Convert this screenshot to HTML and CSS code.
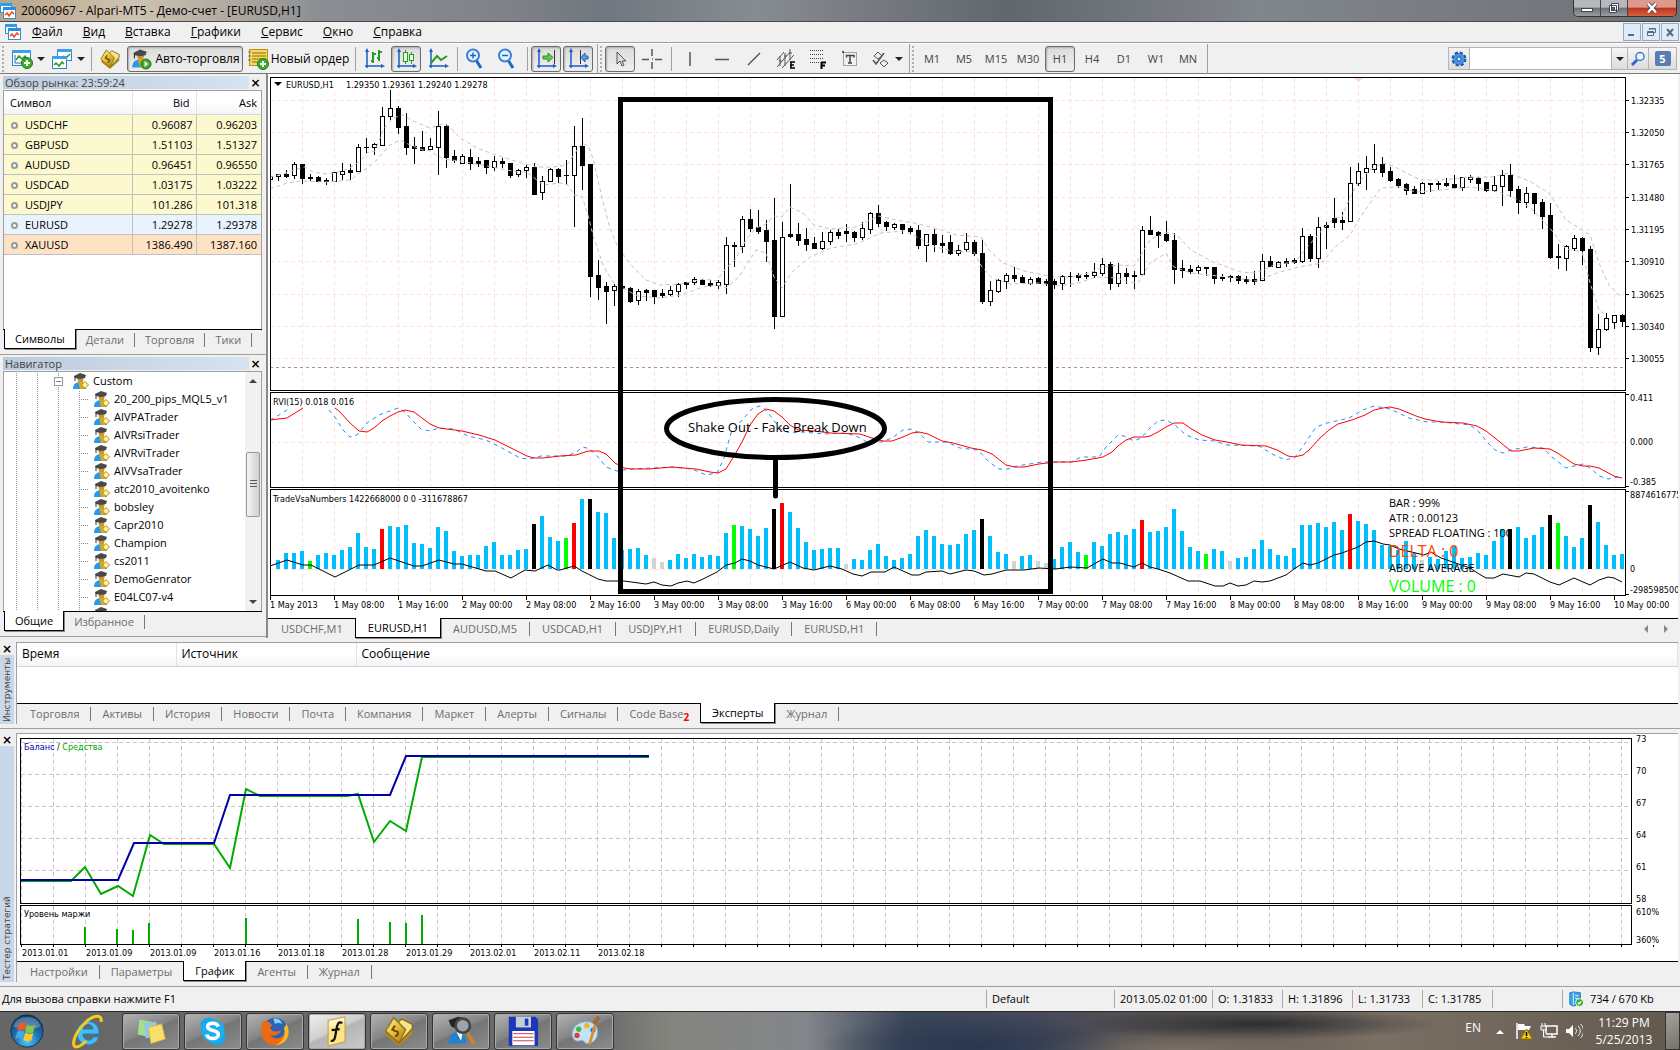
FILE: index.html
```html
<!DOCTYPE html>
<html lang="ru">
<head>
<meta charset="utf-8">
<title>20060967 - Alpari-MT5 - Демо-счет - [EURUSD,H1]</title>
<link rel="stylesheet" href="styles.css">
</head>
<body>
<svg class="defs" aria-hidden="true">
  <defs>
    <linearGradient id="gold" x1="0" y1="0" x2="1" y2="1"><stop offset="0" stop-color="#fff3a0"/><stop offset=".5" stop-color="#e5bc3c"/><stop offset="1" stop-color="#9a7210"/></linearGradient>
    <radialGradient id="orb" cx=".5" cy=".8" r=".8"><stop offset="0" stop-color="#4fd0ff"/><stop offset=".45" stop-color="#2474b4"/><stop offset="1" stop-color="#0e3a66"/></radialGradient>
    <symbol id="i-app" viewBox="0 0 16 16"><rect x=".5" y=".5" width="11" height="9" fill="#fff" stroke="#2a8fd8"/><rect width="12" height="3" fill="#2a9df0"/><rect x="3.500" y="4.500" width="12" height="11" fill="#fff" stroke="#3a8cc8"/><rect x="3" y="4" width="13" height="3" fill="#2a8fe0"/><path d="M5 12l2-2 2 3 3-4 2 2" fill="none" stroke="#f0501e" stroke-width="1.500"/></symbol>
    <symbol id="i-person" viewBox="0 0 18 18"><path d="M2 17c0-5 3-7 7-7s6 3 6 7z" fill="#2a9ae8"/><path d="M7 9h5l1 8H9z" fill="#d8a820"/><circle cx="9.500" cy="7" r="3" fill="#c89830"/><path d="M3 4l6-3 6 2-1 3-5 1-5-1z" fill="#4a4a4a"/><path d="M4 4v5" stroke="#333"/></symbol>
    <symbol id="i-expert" viewBox="0 0 18 18"><use href="#i-person"/><path d="M14 9.500l3.500 3.500-3.500 3.500-3.500-3.500z" fill="#fdf2a0" stroke="#b08a20"/></symbol>
    <symbol id="i-plus" viewBox="0 0 12 12"><circle cx="6" cy="6" r="5.500" fill="#38b02c" stroke="#1d7d18"/><path d="M6 3v6M3 6h6" stroke="#fff" stroke-width="2"/></symbol>
    <symbol id="i-newchart" viewBox="0 0 22 22"><rect x="1.500" y="2.500" width="18" height="15" fill="#fff" stroke="#2a86c8"/><rect x="1" y="2" width="19" height="3" fill="#3da0ea"/><path d="M4 7v8h13" fill="none" stroke="#2a68b8"/><path d="M5 12l3-4 3 3 3-3 4 5" fill="none" stroke="#2a9a20" stroke-width="1.500"/><use href="#i-plus" x="10" y="9" width="12" height="12"/></symbol>
    <symbol id="i-profiles" viewBox="0 0 22 22"><rect x="6.500" y="1.500" width="14" height="11" fill="#fff" stroke="#2a86c8"/><rect x="6" y="1" width="15" height="3" fill="#3da0ea"/><path d="M12 8l3 2 4-4" fill="none" stroke="#2a9a20" stroke-width="1.500"/><rect x="1.500" y="8.500" width="14" height="12" fill="#fff" stroke="#2a86c8"/><rect x="1" y="8" width="15" height="3" fill="#3da0ea"/><path d="M3 17l2-2 3 3 3-4 2 2" fill="none" stroke="#2a9a20" stroke-width="1.500"/></symbol>
    <symbol id="i-gold" viewBox="0 0 24 24"><path d="M2 15L14 6l8 3v5L12 23z" fill="#b58a1c"/><path d="M3 13L14 3l8 4v3L12 21z" fill="#f6e48c" stroke="#8a6a12"/><path d="M2 12L8 2l9 9-5 10z" fill="url(#gold)" stroke="#96730f"/><path d="M9 8l-2 3 2 1c3 0 3 3 0 4" fill="none" stroke="#6b4c05" stroke-width="1.500"/></symbol>
    <symbol id="i-auto" viewBox="0 0 22 22"><use href="#i-person" width="20" height="21"/><circle cx="16" cy="16" r="5" fill="#3aa82a" stroke="#22781a"/><path d="M14.500 13l4 3-4 3z" fill="#fff"/></symbol>
    <symbol id="i-order" viewBox="0 0 22 22"><rect x="2.500" y="1.500" width="18" height="16" fill="#f8d860" stroke="#b8901c"/><path d="M5 5h14M5 8h14M5 11h14M5 14h8" stroke="#8a6a14"/><path d="M1 4h3M1 8h3M1 12h3" stroke="#777"/><use href="#i-plus" x="10" y="10" width="12" height="12"/></symbol>
    <symbol id="i-axes" viewBox="0 0 22 22"><path d="M4 2v18M2 18h18" fill="none" stroke="#1e5cc8" stroke-width="1.500"/><path d="M4 0L2 4h4zM22 18l-4-2v4z" fill="#1e5cc8"/></symbol>
    <symbol id="i-bars" viewBox="0 0 22 22"><use href="#i-axes"/><path d="M10 4v11M8 13h2M10 6h3M16 2v11M14 10h2M16 4h3" fill="none" stroke="#2c9a22" stroke-width="2"/></symbol>
    <symbol id="i-candles" viewBox="0 0 22 22"><use href="#i-axes"/><path d="M10.500 2v14M16.500 4v12" stroke="#2c9a22"/><rect x="8.500" y="4.500" width="4" height="9" fill="#e8ffe0" stroke="#2c9a22"/><rect x="14.500" y="6.500" width="4" height="6" fill="#e8ffe0" stroke="#2c9a22"/></symbol>
    <symbol id="i-line" viewBox="0 0 22 22"><use href="#i-axes"/><path d="M4 15l6-7 4 4 6-4" fill="none" stroke="#2c9a22" stroke-width="2"/></symbol>
    <symbol id="i-zoom" viewBox="0 0 22 22"><path d="M11 12l5 8" stroke="#2467c0" stroke-width="3"/><circle cx="8" cy="7.500" r="6" fill="#e4f2ff" stroke="#3a80d8" stroke-width="2"/><path d="M5 7.500h6" stroke="#2467c0" stroke-width="1.500"/></symbol>
    <symbol id="i-zoomin" viewBox="0 0 22 22"><use href="#i-zoom"/><path d="M8 4.500v6" stroke="#2467c0" stroke-width="1.500"/></symbol>
    <symbol id="i-scroll" viewBox="0 0 22 22"><use href="#i-axes"/><path d="M19.500 2v14" stroke="#333"/><path d="M8 8h5V5l5 4.500-5 4.500v-3H8z" fill="#62c850" stroke="#2c8a22"/></symbol>
    <symbol id="i-shift" viewBox="0 0 22 22"><use href="#i-axes"/><path d="M13.500 2v14" stroke="#333"/><path d="M21 8h-3V5l-4 4.500 4 4.500v-3h3z" fill="#5a9cf0" stroke="#2460b8"/></symbol>
    <symbol id="i-cursor" viewBox="0 0 22 22"><path d="M8 4v12l3-3 2 5 2-1-2-4h4z" fill="#ddd" stroke="#555"/></symbol>
    <symbol id="i-cross" viewBox="0 0 22 22"><path d="M11 1v7M11 14v7M1 11.500h7M14 11.500h7M11 11h1" stroke="#555" stroke-width="1.500"/></symbol>
    <symbol id="i-v" viewBox="0 0 22 22"><path d="M11 4v14" stroke="#555" stroke-width="1.500"/></symbol>
    <symbol id="i-h" viewBox="0 0 22 22"><path d="M4 11.500h14" stroke="#555" stroke-width="1.500"/></symbol>
    <symbol id="i-trend" viewBox="0 0 22 22"><path d="M5 17L17 5" stroke="#555" stroke-width="1.500"/></symbol>
    <symbol id="i-e" viewBox="0 0 22 22"><path d="M2 19L15 4M7 20L19 7M2 12L9 4M5 8v10M10 5v13M15 1v11M4 13h3M9 8h3M14 5h3" fill="none" stroke="#555"/><path d="M15 14h5M15 17h4M15 20h5M16 14v6" stroke="#000" stroke-width="1.500"/></symbol>
    <symbol id="i-f" viewBox="0 0 22 22"><path d="M3 2.500h14M3 6.500h14M3 10.500h14M3 14.500h9" stroke="#444" stroke-dasharray="1 1"/><path d="M14.500 14v7M14 14.500h5M14 17.500h4" stroke="#000" stroke-width="2"/></symbol>
    <symbol id="i-t" viewBox="0 0 22 22"><rect x="4.500" y="4.500" width="13" height="13" fill="none" stroke="#555" stroke-dasharray="1 1"/><rect x="3" y="3" width="2" height="2" fill="#555"/><path d="M7 7.500h8v2M7.500 7v2.500M11 7v8M9 15h4" fill="none" stroke="#444" stroke-width="1.500"/></symbol>
    <symbol id="i-arrows" viewBox="0 0 22 22"><path d="M5 8l4-4 4 4-4 3zM11 15l4 4 4-4-4-3z" fill="#eee" stroke="#555"/><path d="M4 12l3 4 8-11" fill="none" stroke="#555" stroke-width="1.500"/></symbol>
    <symbol id="i-gear" viewBox="0 0 16 16"><circle cx="8" cy="8" r="6" fill="#3f86e0" stroke="#1d56a8" stroke-width="3" stroke-dasharray="3 1.700"/><circle cx="8" cy="8" r="5.500" fill="#4a90e8"/><circle cx="8" cy="8" r="2" fill="#e8f2ff" stroke="#1d56a8"/></symbol>
    <symbol id="i-search" viewBox="0 0 16 16"><path d="M7 9l-5 5" stroke="#2c6ad0" stroke-width="3"/><circle cx="10" cy="5.500" r="4" fill="#f2f8ff" stroke="#3a78d8" stroke-width="1.500"/></symbol>
    <symbol id="i-server" viewBox="0 0 18 18"><path d="M2 2l4-1 8 1v13l-8 2-4-2z" fill="#36a3ee" stroke="#1778bc"/><path d="M6 2v14M8 5l4 .5M8 8l4 .5" stroke="#e6f6ff"/><circle cx="13" cy="13" r="4.500" fill="#3cac30" stroke="#fff"/><path d="M11 13l1.500 1.500L15 11.500" fill="none" stroke="#fff" stroke-width="1.500"/></symbol>
  </defs>
</svg>

<header class="titlebar">
  <svg class="ic16"><use href="#i-app"/></svg>
  <h1>20060967 - Alpari-MT5 - Демо-счет - [EURUSD,H1]</h1>
  <div class="winbtns">
    <button aria-label="Свернуть"><svg viewBox="0 0 14 12"><rect x="1.500" y="6.500" width="11" height="3" fill="#fff" stroke="#445"/></svg></button>
    <button aria-label="Восстановить"><svg viewBox="0 0 14 12"><path d="M4.500 1.500h7v7h-7zM2.500 3.500h7v7h-7z" fill="#fff" stroke="#445"/><rect x="4.500" y="5.500" width="3" height="3" fill="#667" stroke="#445"/></svg></button>
    <button class="close" aria-label="Закрыть"><svg viewBox="0 0 14 12"><path d="M3 1.500l8 9M11 1.500l-8 9" stroke="#435" stroke-width="4"/><path d="M3 1.500l8 9M11 1.500l-8 9" stroke="#fff" stroke-width="2.500"/></svg></button>
  </div>
</header>

<nav class="menubar">
  <svg class="ic16"><use href="#i-app"/></svg>
  <a href="#"><u>Ф</u>айл</a><a href="#"><u>В</u>ид</a><a href="#"><u>В</u>ставка</a><a href="#"><u>Г</u>рафики</a><a href="#"><u>С</u>ервис</a><a href="#"><u>О</u>кно</a><a href="#"><u>С</u>правка</a>
  <div class="mdi">
    <button aria-label="Свернуть график"><svg viewBox="0 0 14 14"><path d="M3 10h6" stroke="#556c85" stroke-width="2"/></svg></button>
    <button aria-label="Восстановить график"><svg viewBox="0 0 14 14"><path d="M5.500 5V3.500h6v4H10M3.500 6.500h6v4h-6zM3 7.500h7M5 4h7" fill="none" stroke="#556c85"/></svg></button>
    <button aria-label="Закрыть график"><svg viewBox="0 0 14 14"><path d="M4 4l6 7M10 4l-6 7" stroke="#556c85" stroke-width="2"/></svg></button>
  </div>
</nav>

<div class="toolbar">
  <i class="grip"></i>
  <button class="dd" aria-label="Новый график"><svg class="ic22"><use href="#i-newchart"/></svg><i class="caret"></i></button>
  <button class="dd" aria-label="Профили"><svg class="ic22"><use href="#i-profiles"/></svg><i class="caret"></i></button>
  <i class="sep"></i>
  <button aria-label="MetaEditor"><svg class="ic22"><use href="#i-gold"/></svg></button>
  <button class="wide on"><svg class="ic22"><use href="#i-auto"/></svg>Авто-торговля</button>
  <button class="wide"><svg class="ic22"><use href="#i-order"/></svg>Новый ордер</button>
  <i class="sep"></i>
  <button aria-label="Бары"><svg class="ic22"><use href="#i-bars"/></svg></button>
  <button class="on" aria-label="Свечи"><svg class="ic22"><use href="#i-candles"/></svg></button>
  <button aria-label="Линия"><svg class="ic22"><use href="#i-line"/></svg></button>
  <i class="sep"></i>
  <button aria-label="Увеличить"><svg class="ic22"><use href="#i-zoomin"/></svg></button>
  <button aria-label="Уменьшить"><svg class="ic22"><use href="#i-zoom"/></svg></button>
  <i class="sep"></i>
  <button class="on" aria-label="Автопрокрутка"><svg class="ic22"><use href="#i-scroll"/></svg></button>
  <button class="on" aria-label="Сдвиг графика"><svg class="ic22"><use href="#i-shift"/></svg></button>
  <i class="sep tall"></i><i class="grip slim"></i>
  <button class="on" aria-label="Курсор"><svg class="ic22"><use href="#i-cursor"/></svg></button>
  <button aria-label="Перекрестие"><svg class="ic22"><use href="#i-cross"/></svg></button>
  <i class="sep"></i>
  <button aria-label="Вертикальная линия"><svg class="ic22"><use href="#i-v"/></svg></button>
  <button aria-label="Горизонтальная линия"><svg class="ic22"><use href="#i-h"/></svg></button>
  <button aria-label="Трендовая линия"><svg class="ic22"><use href="#i-trend"/></svg></button>
  <button aria-label="Каналы"><svg class="ic22"><use href="#i-e"/></svg></button>
  <button aria-label="Фибоначчи"><svg class="ic22"><use href="#i-f"/></svg></button>
  <button aria-label="Текст"><svg class="ic22"><use href="#i-t"/></svg></button>
  <button class="dd" aria-label="Стрелки"><svg class="ic22"><use href="#i-arrows"/></svg><i class="caret"></i></button>
  <i class="sep tall"></i><i class="grip slim"></i>
  <button>M1</button><button>M5</button><button>M15</button><button>M30</button><button class="on">H1</button><button>H4</button><button>D1</button><button>W1</button><button>MN</button>
  <i class="sep tall"></i>
  <form class="search">
    <button type="button" aria-label="Настройки поиска"><svg class="ic16"><use href="#i-gear"/></svg></button>
    <input type="text" aria-label="Поиск">
    <button type="button" class="drop" aria-label="История поиска"><i class="caret"></i></button>
    <button type="button" aria-label="Найти"><svg class="ic16"><use href="#i-search"/></svg></button>
    <button type="button" class="msg"><span>5</span></button>
  </form>
</div>

<main class="workspace">
  <aside class="sidebar">
    <section class="dock">
      <div class="dock-head"><h2>Обзор рынка: 23:59:24</h2><button aria-label="Закрыть обзор рынка">×</button></div>
      <div class="dock-body market">
        <table>
          <thead><tr><th>Символ</th><th>Bid</th><th>Ask</th></tr></thead>
          <tbody>
            <tr><td>USDCHF</td><td>0.96087</td><td>0.96203</td></tr>
            <tr><td>GBPUSD</td><td>1.51103</td><td>1.51327</td></tr>
            <tr><td>AUDUSD</td><td>0.96451</td><td>0.96550</td></tr>
            <tr><td>USDCAD</td><td>1.03175</td><td>1.03222</td></tr>
            <tr><td>USDJPY</td><td>101.286</td><td>101.318</td></tr>
            <tr class="blue"><td>EURUSD</td><td>1.29278</td><td>1.29378</td></tr>
            <tr class="peach"><td>XAUUSD</td><td>1386.490</td><td>1387.160</td></tr>
          </tbody>
        </table>
      </div>
      <div class="tabs"><button class="sel">Символы</button><button>Детали</button><button>Торговля</button><button>Тики</button></div>
    </section>
    <section class="dock nav">
      <div class="dock-head"><h2>Навигатор</h2><button aria-label="Закрыть навигатор">×</button></div>
      <div class="dock-body tree">
        <ul>
          <li class="root"><svg class="ic18"><use href="#i-expert"/></svg>Custom</li>
          <li><svg class="ic18"><use href="#i-expert"/></svg>20_200_pips_MQL5_v1</li>
          <li><svg class="ic18"><use href="#i-expert"/></svg>AIVPATrader</li>
          <li><svg class="ic18"><use href="#i-expert"/></svg>AIVRsiTrader</li>
          <li><svg class="ic18"><use href="#i-expert"/></svg>AIVRviTrader</li>
          <li><svg class="ic18"><use href="#i-expert"/></svg>AIVVsaTrader</li>
          <li><svg class="ic18"><use href="#i-expert"/></svg>atc2010_avoitenko</li>
          <li><svg class="ic18"><use href="#i-expert"/></svg>bobsley</li>
          <li><svg class="ic18"><use href="#i-expert"/></svg>Capr2010</li>
          <li><svg class="ic18"><use href="#i-expert"/></svg>Champion</li>
          <li><svg class="ic18"><use href="#i-expert"/></svg>cs2011</li>
          <li><svg class="ic18"><use href="#i-expert"/></svg>DemoGenrator</li>
          <li><svg class="ic18"><use href="#i-expert"/></svg>E04LC07-v4</li>
          <li><svg class="ic18"><use href="#i-expert"/></svg>eabbbot</li>
        </ul>
        <div class="vscroll"><i class="up"></i><i class="thumb"></i><i class="down"></i></div>
      </div>
      <div class="tabs"><button class="sel">Общие</button><button>Избранное</button></div>
    </section>
  </aside>

  <section class="charts">
    <div class="chart">
      <svg class="plot" id="price"></svg><svg class="axis" id="price-axis"></svg>
      <svg class="plot" id="rvi"></svg><svg class="axis" id="rvi-axis"></svg>
      <svg class="plot" id="vsa"></svg><svg class="axis" id="vsa-axis"></svg>
      <svg class="time" id="time"></svg>
      <svg class="notes">
        <g fill="none" stroke="#000" stroke-width="5">
          <rect x="350.500" y="22.500" width="430" height="492"/>
          <ellipse cx="505.500" cy="351.500" rx="109" ry="29"/>
          <path d="M505.500 382v37" stroke-linecap="round"/>
        </g>
        <text x="418" y="355">Shake Out - Fake Break Down</text>
      </svg>
    </div>
    <div class="tabs chart-tabs">
      <button>USDCHF,M1</button><button class="sel">EURUSD,H1</button><button>AUDUSD,M5</button><button>USDCAD,H1</button><button>USDJPY,H1</button><button>EURUSD,Daily</button><button>EURUSD,H1</button>
      <span class="pager"><i></i><i></i></span>
    </div>
  </section>
</main>

<section class="panel toolbox">
  <div class="strip"><button aria-label="Закрыть инструменты">×</button><h2>Инструменты</h2></div>
  <div class="panel-main">
    <div class="log"><table><thead><tr><th>Время</th><th>Источник</th><th>Сообщение</th></tr></thead></table></div>
    <div class="tabs"><button>Торговля</button><button>Активы</button><button>История</button><button>Новости</button><button>Почта</button><button>Компания</button><button>Маркет</button><button>Алерты</button><button>Сигналы</button><button>Code Base<sub>2</sub></button><button class="sel">Эксперты</button><button>Журнал</button></div>
  </div>
</section>

<section class="panel tester">
  <div class="strip"><button aria-label="Закрыть тестер">×</button><h2>Тестер стратегий</h2></div>
  <div class="panel-main">
    <div class="report">
      <svg class="plot" id="balance"></svg><svg class="axis" id="balance-axis"></svg>
      <svg class="plot" id="margin"></svg><svg class="axis" id="margin-axis"></svg>
      <svg class="time" id="dates"></svg>
    </div>
    <div class="tabs"><button>Настройки</button><button>Параметры</button><button class="sel">График</button><button>Агенты</button><button>Журнал</button></div>
  </div>
</section>

<footer class="status">
  <span class="help">Для вызова справки нажмите F1</span>
  <span class="prof">Default</span><span class="date">2013.05.02 01:00</span><span>O: 1.31833</span><span>H: 1.31896</span><span>L: 1.31733</span><span>C: 1.31785</span><span></span>
  <span class="net"><svg class="ic16"><use href="#i-server"/></svg>734 / 670 Kb</span>
</footer>

<nav class="taskbar">
  <button class="orb" aria-label="Пуск"><svg viewBox="0 0 40 38"><circle cx="20" cy="19" r="18" fill="url(#orb)" stroke="#0c2c4c"/><path d="M5 14c3-14 27-14 30 0-9 4-20 4-30 0z" fill="#fff" opacity=".25"/><path d="M11 11c3-2 5-2 8 0l-2 8c-3-2-5-2-8 0z" fill="#f0582a"/><path d="M20 12c3 2 5 2 9 0l-2 8c-3 2-6 2-9 0z" fill="#8cc63c"/><path d="M9 20c3-2 5-2 8 0l-2 8c-3-2-5-2-8 0z" fill="#4aa4e8"/><path d="M18 21c3 2 6 2 9 0l-2 8c-3 2-6 2-9 0z" fill="#fcc82c"/></svg></button>
  <button class="plain" aria-label="Internet Explorer"><svg viewBox="0 0 36 36"><path d="M29 21H13c0 7 9 8 10 3h6c-4 12-22 10-22-4 0-15 23-16 22 1zM13 16h10c0-6-10-6-10 0z" fill="#46bdf2" stroke="#1a7fc0"/><path d="M31 9c2-9-9-7-17 2C4 21 1 33 6 34c4 0 8-4 10-6" fill="none" stroke="#f6c920" stroke-width="3"/></svg></button>
  <button class="app" aria-label="Записки"><svg viewBox="0 0 36 36"><path d="M5 5l15 3-3 17-14-3z" fill="#a6dc8e"/><path d="M10 9l14-1 2 17-14 1z" fill="#92c7ee"/><path d="M15 14l15-4 4 17-16 5z" fill="#f8e06a" stroke="#d8b93c"/></svg></button>
  <button class="app" aria-label="Skype"><svg viewBox="0 0 36 36"><circle cx="13" cy="12" r="9" fill="#12a9ec"/><circle cx="23" cy="25" r="9" fill="#12a9ec"/><circle cx="18" cy="18" r="13" fill="#18b0f2"/><path d="M24 13c-2-5-12-5-12 0 0 6 12 3 12 9 0 6-12 6-13 0" fill="none" stroke="#fff" stroke-width="4"/></svg></button>
  <button class="app" aria-label="Firefox"><svg viewBox="0 0 36 36"><circle cx="18" cy="17" r="14" fill="#2b62b4"/><path d="M16 4c6-1 9 2 10 6-4-2-8 0-8 0z" fill="#8cd0f6"/><path d="M4 8c3-3 5 0 8 0l3 4-3 2c3 5 8 6 13 3-2 6-9 8-13 5 7 9 18 3 18-8 3 9-1 20-13 20C4 34 0 20 4 8z" fill="#ec6a15"/><path d="M31 10c6 11 0 24-13 24 8-2 13-12 10-19z" fill="#f9b823"/></svg></button>
  <button class="app active" aria-label="Скрипты"><svg viewBox="0 0 36 36"><path d="M8 6L27 2v28L8 35z" fill="#fbe48a" stroke="#bf9430"/><path d="M9 7l17-4v5L9 14z" fill="#fff6c8"/><path d="M24 9c-5-3-6 3-7 9s-1 12-6 11M12 17l9-1" fill="none" stroke="#111" stroke-width="2.500"/></svg></button>
  <button class="app" aria-label="MetaTrader"><svg viewBox="0 0 24 24"><use href="#i-gold"/></svg></button>
  <button class="app" aria-label="Эксперты"><svg viewBox="0 0 36 36"><path d="M4 32c0-9 5-13 11-13s9 6 9 13z" fill="#2480d0"/><path d="M13 19l5 10 2-9z" fill="#fff"/><path d="M4 6l11-4 11 3-2 8-9 3-8-3z" fill="#222"/><path d="M25 20l8 13" stroke="#c8842c" stroke-width="4"/><circle cx="20" cy="12" r="8" fill="#9aa4ae" stroke="#444" stroke-width="3"/></svg></button>
  <button class="app" aria-label="Total Commander"><svg viewBox="0 0 36 36"><path d="M2 2h30l3 3v30H2z" fill="#1a38b8"/><rect x="10" y="2" width="17" height="12" fill="#c8ccd6"/><rect x="20" y="4" width="4" height="8" fill="#1a38b8"/><rect x="6" y="18" width="25" height="16" fill="#fff"/><path d="M7 21h23M7 25h23M7 29h23" stroke="#c8283c"/></svg></button>
  <button class="app" aria-label="Paint"><svg viewBox="0 0 36 36"><path d="M16 8c12-2 17 5 16 13-1 10-12 14-15 9-2-3-5 0-9-1-8-3-5-19 8-21z" fill="#c2e2f5" stroke="#7fb2d2"/><circle cx="11" cy="16" r="3" fill="#52b043"/><circle cx="20" cy="12" r="3" fill="#f2b420"/><circle cx="9" cy="23" r="3" fill="#e0402c"/><circle cx="27" cy="17" r="3" fill="#3c7ae0"/><path d="M32 2l-9 31" stroke="#e08a2c" stroke-width="3"/><path d="M34 2l-6 8" stroke="#a06a3c" stroke-width="5"/></svg></button>
  <div class="tray">
    <span>EN</span>
    <svg class="ic16" viewBox="0 0 16 16"><path d="M4 11l4-4 4 4z" fill="#fff"/></svg>
    <svg class="ic18" viewBox="0 0 18 18"><path d="M2 1v16" stroke="#fff" stroke-width="1.500"/><path d="M3 2h6l1 2h6l-2 4H3z" fill="#fff"/><path d="M11.500 7l6 10h-12z" fill="#f8cc18" stroke="#8a6a00"/><path d="M11.500 10v4M11.500 15v1" stroke="#000" stroke-width="1.500"/></svg>
    <svg class="ic18" viewBox="0 0 18 18"><path d="M6 4h11v8H6zM8 15h8M12 12v3" fill="none" stroke="#fff" stroke-width="1.500"/><path d="M2 1v3M5 1v3M1 4h5v4H1zM3.500 8v7H8" fill="#777" stroke="#fff"/></svg>
    <svg class="ic18" viewBox="0 0 18 18"><path d="M1 7h3l4-4v12l-4-4H1z" fill="#fff"/><path d="M10 6c2 2 2 4 0 6M13 4c3 3 3 7 0 10M15.500 2c4 4 4 10 0 14" fill="none" stroke="#eee"/></svg>
    <time>11:29 PM<br>5/25/2013</time>
    <button aria-label="Показать рабочий стол"></button>
  </div>
</nav>
<script src="charts.js"></script>
</body>
</html>
```
FILE: styles.css
```css
*, *::before { box-sizing: border-box; }
body { margin: 0; min-height: 100vh; display: flex; flex-direction: column; overflow-x: hidden; background: #f0f0f0; color: #000; font: 12px/16px "Open Sans", "Noto Sans", sans-serif; }
button, input { font: inherit; color: inherit; }
button { padding: 0; border: 0; background: none; }
h1, h2 { margin: 0; font-size: 12px; font-weight: 400; white-space: nowrap; }
svg { display: block; flex: none; }
.defs { position: absolute; width: 0; height: 0; }
.ic16 { width: 16px; height: 16px; }
.ic18 { width: 18px; height: 18px; }
.ic22 { width: 22px; height: 22px; }
.caret { border: 4px solid transparent; border-top-color: #222; border-bottom: 0; }

.titlebar { display: flex; align-items: center; gap: 5px; height: 21px; background: linear-gradient(90deg, #b9a48a 0, #cfc3b2 8%, #a8a39d 15%, #8b8e92 19%, #7f8388 30%, #71777f 36%, #878c90 45%, #62666e 60%, #81868b 75%, #6d7176 100%); }
.titlebar h1 { flex: 1; }
.winbtns { display: flex; align-self: flex-start; height: 17px; margin-right: 3px; border: 1px solid #333; border-top: 0; border-radius: 0 0 5px 5px; overflow: hidden; }
.winbtns button { display: grid; place-items: center; width: 27px; border-right: 1px solid #444; background: linear-gradient(#b6b8bb 45%, #6d7076 50%, #989ba0); }
.winbtns .close { width: 48px; border: 0; background: linear-gradient(#dd9a8c 45%, #bc3420 50%, #d8603e); }
.winbtns svg { width: 14px; height: 12px; }

.menubar { display: flex; align-items: center; height: 22px; border-top: 1px solid #4a4a4a; border-bottom: 1px solid #a0a0a0; padding: 0 1px 0 5px; }
.menubar a { color: #000; text-decoration: none; margin-right: 20px; }
.menubar .ic16 { margin-right: 11px; }
.mdi { display: flex; gap: 1px; margin-left: auto; }
.mdi button { width: 18px; height: 18px; border: 1px solid #93aac4; background: #dfebf7; display: grid; place-items: center; }
.mdi svg { width: 14px; height: 14px; }

.toolbar { display: flex; align-items: center; height: 31px; border-top: 1px solid #fff; border-bottom: 1px solid #7a7a7a; color: #444; font-size: 11px; }
.toolbar > button { display: flex; align-items: center; justify-content: center; flex: none; width: 30px; height: 26px; margin: 0 1px; border-radius: 3px; }
.toolbar .dd { width: 38px; gap: 4px; }
.toolbar .wide { width: 106px; gap: 2px; color: #000; font-size: 12px; }
.toolbar .on { border: 1px solid #6c6c6c; background: linear-gradient(#dcdcdc, #efefef); box-shadow: inset 1px 1px 2px #aaa; }
.toolbar .wide.on { width: 116px; gap: 3px; }
.grip { flex: none; width: 4px; height: 26px; margin: 0 2px; border-left: 2px dotted #b0b0b0; }
.grip.slim { margin: 0; }
.sep { flex: none; width: 1px; height: 24px; margin: 0 2px 0 3px; background: #a0a0a0; }
.sep.tall { height: 30px; }
.search { display: flex; flex: none; margin: 0 3px 0 auto; height: 23px; border: 1px solid #b4b4b4; }
.search button { display: grid; place-items: center; width: 21px; border-right: 1px solid #b4b4b4; background: linear-gradient(#f4f4f4, #ddd); }
.search input { width: 142px; border: 0; border-right: 1px solid #b4b4b4; background: #fff; }
.search .drop { width: 16px; }
.search .msg { width: 27px; border: 0; }
.msg span { width: 16px; height: 15px; border-radius: 2px; background: #5a7cb0; color: #fff; font-weight: 700; line-height: 15px; }

.workspace { display: flex; flex: none; height: 564px; }
.sidebar { flex: none; width: 266px; display: flex; flex-direction: column; font-size: 11px; }
.dock { padding: 2px 4px 0 3px; height: 281px; border-bottom: 1px solid #a0a0a0; display: flex; flex-direction: column; }
.dock.nav { height: 282px; }
.dock-head { display: flex; justify-content: space-between; align-items: center; height: 13px; margin-bottom: 1px; background: linear-gradient(90deg, #bccbdc, #d7e4f2); color: #444; }
.dock-head h2 { padding-left: 2px; font-size: 11px; line-height: 13px; }
.dock-head button { width: 13px; height: 13px; background: #f0f0f0; color: #000; font: 700 12px/12px "DejaVu Sans", sans-serif; }
.dock-body { flex: 1; min-height: 0; border: 1px solid #a0a0a0; border-width: 1px 1px 0; background: #fff; }
.market table { width: 100%; border-collapse: collapse; table-layout: fixed; }
.market th { height: 23px; padding: 2px 6px 0; font-weight: 400; text-align: right; background: linear-gradient(#fff 45%, #f3f4f6); border-bottom: 1px solid #d5d5d5; border-right: 1px solid #e0e3e8; }
.market th:first-child { text-align: left; width: 128px; }
.market th:nth-child(2) { width: 64px; }
.market td { height: 20px; padding: 0 3px; text-align: right; background: #fdf9cf; border-bottom: 1px solid #c0c0c0; border-right: 1px solid #c0c0c0; line-height: 19px; }
.market td:first-child { text-align: left; padding-left: 7px; }
.market td:first-child::before { content: ""; display: inline-block; width: 7px; height: 7px; margin-right: 7px; border: 2px solid #999; border-radius: 50%; background: #fff; }
.market td:last-child, .market th:last-child { border-right: 0; padding-right: 4px; }
.market .blue td { background: #e8f3fe; }
.market .peach td { background: #fde2c4; }

.tabs { display: flex; flex: none; align-items: center; height: 21px; padding-left: 2px; border-top: 1px solid #000; color: #6d6d6d; font-size: 11px; }
.tabs button { position: relative; height: 14px; padding: 0 10px; line-height: 14px; border-right: 1px solid #777; }
.tabs .sel { align-self: flex-start; height: 20px; line-height: 18px; margin-top: -1px; margin-left: -1px; background: #fff; color: #000; border: 1px solid #000; border-top: 0; box-shadow: 1px 1px 0 #888; }
.dock .tabs { margin-bottom: 4px; }
.tabs sub { font-size: 10px; line-height: 0; color: #f00; font-weight: 700; }
.panel .tabs button { padding: 0 11px; }

.tree { display: flex; }
.tree ul { position: relative; flex: 1; margin: 0; padding: 0; list-style: none; overflow: hidden; background: repeating-linear-gradient(#fff 0 1px, transparent 1px 2px), linear-gradient(#999, #999) 12px 0/1px 100% no-repeat, linear-gradient(#999, #999) 33px 0/1px 100% no-repeat, linear-gradient(#999, #999) 54px 0/1px 100% no-repeat, linear-gradient(#999, #999) 75px 18px/1px 100% no-repeat, #fff; }
.tree li { display: flex; align-items: center; gap: 4px; height: 18px; margin-left: 77px; }
.tree li::before { content: ""; width: 7px; border-top: 1px dotted #888; }
.tree .root { margin-left: 50px; }
.tree .root::before { content: "−"; width: 9px; height: 9px; margin-right: 4px; border: 1px solid #999; background: #fff; color: #246; font-size: 10px; line-height: 7px; text-align: center; }
.vscroll { width: 16px; display: flex; flex-direction: column; align-items: center; padding: 7px 0; background: #f1f1f1; }
.vscroll .up { border: 4px solid transparent; border-top: 0; border-bottom-color: #444; }
.vscroll .down { border: 4px solid transparent; border-bottom: 0; border-top-color: #444; margin-top: auto; }
.vscroll .thumb { width: 14px; height: 65px; margin-top: 69px; border: 1px solid #979797; border-radius: 2px; background: repeating-linear-gradient(#555 0 1px, transparent 1px 3px) center/7px 9px no-repeat, linear-gradient(90deg, #f5f5f5, #cfcfcf); }

.charts { flex: 1; min-width: 0; margin-right: 2px; display: flex; flex-direction: column; border-left: 2px solid #8a8a8a; border-bottom: 1px solid #a0a0a0; background: #fff; }
.chart { position: relative; flex: none; display: grid; grid-template-columns: minmax(0, 1fr) 52px; grid-template-rows: 314px 96px 107px 20px; row-gap: 1px; height: 542px; padding: 3px 0 0 2px; }
.plot { width: 100%; height: 100%; border: 1px solid #000; overflow: hidden; background: #fff; }
.axis { width: 100%; height: 100%; overflow: hidden; }
.time { grid-column: 1 / -1; width: 100%; height: 100%; margin-top: -1px; overflow: hidden; }
.chart text, .report text { font-family: "DejaVu Sans Condensed", "DejaVu Sans", sans-serif; font-size: 9px; }
.chart .notes { position: absolute; top: 3px; left: 2px; width: 100%; height: 100%; overflow: visible; pointer-events: none; }
.chart .notes text { font: 13px "Open Sans", sans-serif; }
.chart .info { font-family: "Open Sans", sans-serif; font-size: 11px; }
.chart .info.big { font-size: 16px; }
.chart-tabs { height: 20px; margin-top: 2px; padding-left: 1px; background: #f0f0f0; }
.chart-tabs button { padding: 0 12px; }
.pager { display: flex; gap: 16px; margin: 0 10px 0 auto; }
.pager i { border: 4px solid transparent; border-left-color: #888; border-right: 0; }
.pager i:first-child { border-right: 4px solid #888; border-left: 0; }

.panel { flex: none; display: flex; padding: 4px 2px 4px 0; border-bottom: 1px solid #a0a0a0; }
.strip { flex: none; width: 16px; display: flex; flex-direction: column; align-items: center; padding-right: 2px; }
.strip button { height: 13px; font: 700 12px/12px "DejaVu Sans", sans-serif; }
.strip h2 { flex: 1; width: 14px; writing-mode: vertical-rl; transform: rotate(180deg); background: #c9d8e8; color: #444; font: 9px/14px "DejaVu Sans", sans-serif; padding-top: 2px; }
.panel-main { flex: 1; min-width: 0; border: 1px solid #a0a0a0; border-width: 1px 0 0 1px; }
.log { height: 60px; background: #fff; }
.log table { width: 100%; border-collapse: collapse; table-layout: fixed; }
.log th { height: 23px; padding: 0 5px; font-weight: 400; text-align: left; border-bottom: 1px solid #d5d5d5; border-right: 1px solid #e0e3e8; background: linear-gradient(#fff 45%, #f3f4f6); }
.log th:nth-child(1) { width: 159px; }
.log th:nth-child(2) { width: 180px; }
.report { display: grid; grid-template-columns: minmax(0, 1fr) 46px; grid-template-rows: 166px 40px 15px; row-gap: 1px; height: 227px; padding: 4px 0 0 3px; background: #fff; }
.report .axis { overflow: visible; }

.status { display: flex; flex: 1 0 24px; align-items: center; font-size: 11px; white-space: nowrap; }
.status span { display: flex; align-items: center; height: 18px; padding: 0 5px; border-left: 1px solid #a8a8a8; flex: none; width: 70px; }
.status .help { flex: 1; width: auto; border: 0; padding-left: 2px; }
.status .prof { width: 128px; }
.status .date { width: 98px; }
.status .net { width: 118px; gap: 6px; }

.taskbar { display: flex; flex: none; align-items: center; gap: 4px; height: 39px; border-top: 1px solid #2b2b2b; background: radial-gradient(ellipse 150px 34px at 970px 34px, #28364f, transparent), radial-gradient(ellipse 180px 16px at 1260px 12px, #2c2d31, transparent), radial-gradient(ellipse 150px 24px at 1180px 40px, #7d7268, transparent), linear-gradient(90deg, #666 0, #6c6c6c 36%, #85857f 40%, #82858a 48%, #3b4659 54%, #46495a 62%, #58534f 70%, #7b7065 82%, #62594f 100%); color: #fff; }
.taskbar button { display: grid; place-items: center; height: 37px; }
.taskbar button svg { width: 36px; height: 36px; }
.orb { width: 54px; }
.plain { width: 60px; }
.taskbar .app { width: 58px; border: 1px solid #333; border-radius: 3px; background: linear-gradient(155deg, #b4b4b4, #858585 45%, #757575 50%, #8c8c8c); box-shadow: inset 0 0 0 1px #ababab; }
.taskbar .app svg { width: 32px; height: 32px; }
.taskbar .app.active { background: linear-gradient(155deg, #f0f0f0, #cfcfcf 45%, #b5b5b5 50%, #cacaca); }
.tray { display: flex; align-items: center; gap: 7px; margin-left: auto; height: 100%; }
.tray span { margin-bottom: 6px; margin-right: 4px; }
.tray time { width: 68px; text-align: center; line-height: 17px; }
.tray button { width: 15px; height: 38px; border: 1px solid #333; background: linear-gradient(155deg, #a5a19b, #77716a); }
```
FILE: charts.js
```js
const NS = 'http://www.w3.org/2000/svg';

function layer(id, dx, dy) {
  const g = document.createElementNS(NS, 'g');
  g.setAttribute('transform', `translate(${-dx} ${-dy})`);
  document.getElementById(id).append(g);
  const api = {
    add(tag, attrs, text) {
      const el = document.createElementNS(NS, tag);
      for (const k in attrs) el.setAttribute(k, attrs[k]);
      if (text !== undefined) el.textContent = text;
      g.append(el);
      return el;
    },
    rect(x, y, width, height, fill) { api.add('rect', { x, y, width, height, fill }); },
    line(points, stroke, more) { api.add('polyline', { points, fill: 'none', stroke, ...more }); },
    text(x, y, s, more) { api.add('text', { x, y, ...more }, s); },
    grid(x0, x1, step, y0, y1, rows, color, dash) {
      for (let x = x0; x <= x1; x += step) api.add('path', { d: `M${x + 0.5} ${y0}V${y1}`, stroke: color, 'stroke-dasharray': dash });
      for (const y of rows) api.add('path', { d: `M${x0} ${y + 0.5}H${x1}`, stroke: color, 'stroke-dasharray': dash });
    }
  };
  return api;
}

const X0 = 270, STEP = 8, END = 3000;
const pink = '#ffe0e0';

// Candles: high, body top, body bottom, low, 1 = falling
const candles = [
[176,176,179,179,0],[174,174,176,180,0],[170,174,176,177,1],[162,164,175,178,0],[164,164,178,183,1],[174,177,178,180,1],[176,177,181,181,1],[178,180,181,184,1],[172,172,181,181,0],[163,171,174,179,0],
[164,170,172,179,1],[144,147,171,171,0],[138,147,147,152,1],[143,144,147,154,0],[107,116,145,145,0],[90,108,116,119,0],[106,108,127,133,1],[113,126,147,154,1],[137,146,148,163,1],[131,147,150,150,1],
[138,146,149,149,0],[111,126,147,174,0],[124,126,157,167,1],[150,156,160,162,1],[154,156,163,163,0],[149,157,163,169,1],[157,161,163,166,1],[160,160,167,173,1],[156,161,167,170,0],[158,161,163,167,1],
[163,163,175,177,1],[169,170,174,176,0],[165,167,170,177,0],[163,167,194,194,1],[176,181,192,199,0],[168,169,181,181,0],[168,169,176,182,1],[160,175,175,184,1],[126,146,175,226,0],[118,146,165,189,1],
[164,164,276,296,1],[260,275,287,299,1],[282,286,291,323,1],[284,286,290,305,0],[286,286,288,288,1],[287,288,301,302,1],[289,291,300,304,0],[289,290,292,300,1],[290,290,296,303,1],[289,293,295,297,1],
[286,290,294,296,0],[283,284,291,296,0],[282,282,284,288,1],[277,279,282,284,0],[279,280,284,284,1],[280,283,285,286,1],[280,282,285,288,0],[237,245,284,293,0],[242,245,246,266,1],[216,219,246,252,0],
[209,219,228,231,1],[210,227,231,233,1],[220,230,241,261,1],[198,240,316,328,1],[222,237,316,316,0],[184,234,236,237,1],[223,234,240,245,1],[228,239,244,250,1],[237,243,248,248,1],[232,241,248,249,0],
[230,232,241,244,0],[229,232,235,238,1],[224,231,233,241,1],[231,232,237,241,1],[222,228,237,239,0],[212,213,229,233,0],[205,213,223,226,1],[221,222,226,230,1],[223,224,227,229,0],[224,224,229,233,1],
[226,228,231,233,1],[225,230,245,248,1],[234,234,245,261,0],[229,234,244,251,1],[235,243,245,252,1],[235,242,253,254,1],[245,250,253,255,0],[233,242,249,251,0],[240,242,253,255,1],[239,253,301,303,1],
[281,290,301,305,0],[279,280,291,292,0],[273,275,281,288,0],[267,275,278,281,1],[275,277,282,282,1],[277,279,283,284,0],[277,278,283,283,1],[279,281,283,285,1],[279,281,284,288,1],[275,276,283,289,0],
[272,276,276,286,1],[273,275,277,280,1],[272,275,276,278,1],[263,272,275,277,0],[258,264,273,275,0],[262,264,283,289,1],[263,273,283,286,0],[268,273,276,283,1],[271,275,276,288,1],[226,230,274,274,0],
[216,230,234,234,1],[231,232,235,247,1],[221,234,240,241,1],[233,240,269,283,1],[260,268,270,277,1],[265,269,271,273,1],[265,267,270,273,0],[267,267,268,275,1],[267,267,278,283,1],[274,277,278,280,1],
[275,276,277,281,1],[275,276,280,283,1],[276,279,281,283,1],[271,279,281,284,1],[254,261,280,280,0],[256,261,266,266,1],[261,262,267,267,0],[258,261,263,266,1],[258,260,262,263,1],[228,236,261,262,0],
[234,236,258,261,1],[217,227,258,267,0],[222,225,227,248,1],[198,218,222,227,1],[212,220,222,229,1],[167,183,221,221,0],[163,171,183,185,0],[156,168,172,189,0],[144,164,169,172,0],[157,164,172,176,1],
[167,171,180,181,1],[178,179,185,187,1],[183,184,190,194,1],[186,189,193,193,1],[182,183,193,193,0],[183,183,184,191,1],[181,183,184,189,1],[178,183,185,186,1],[175,184,187,188,1],[177,177,187,190,0],
[175,177,179,182,0],[177,178,183,190,1],[182,182,190,191,1],[176,185,190,191,0],[170,175,186,205,0],[164,175,190,196,1],[186,189,202,213,1],[187,193,202,207,0],[193,193,203,213,1],[199,202,216,228,1],
[203,215,257,258,1],[244,256,257,268,1],[245,246,258,270,0],[235,238,248,250,0],[237,238,250,264,1],[246,249,347,351,1],[314,329,347,354,0],[313,318,329,330,0],[315,315,322,328,0],[314,315,321,326,1]
];

// Volume bars, from the second candle on: height and colour (k black, r red, g green, s silver)
const volumes = ('9 16 16 18 8g 14 16 14 19 22 36 22 20 40r 43 42 44 26 25 21 42 38 18 13 14 14 23 27 14 14 19 20 45k 53 32 28 31g 46r 70 70k 57 56 31 19 20 21 14 11s 7s 9 15 11 15 12 14 13 36 44g 43 40 33 41 60k 66r 57 41 27 19 20 21 21 5s 10 9 19 25 13 9 11 15 33 39 33 25 24 25 35 39 50k 33 17 15 8s 13 14 8s 6s 10 22 27 17 14g 27 23 35 37 34 40 49r 37 38 42 60 38 22 18 15g 20 18 8s 11 12 20 29 20 14 13 21 44 44 46 42 47 39 55r 48 45 39 24 23 19 28 16 9s 12 10 18 23 11 12 16 14 28 40 40k 42 31 34 42 54k 46g 33 22 31 64k 47 24 14 15').split(' ');
const tone = { k: '#000', r: '#f00', g: '#0f0', s: '#d3d3d3' };

const p = layer('price', 271, 78);
p.grid(X0, END, 32, 78, 390, [100, 132, 164, 197, 229, 261, 294, 326, 358], pink, '4 3');
p.add('path', { d: `M270 367.500H${END}`, stroke: '#999', 'stroke-dasharray': '3 3' });
p.add('path', { d: 'M1354 78h9l-4.500 4z', fill: '#ffd4d4' });
candles.forEach(([hi, top, bot, lo, down], k) => {
  const x = X0 + k * STEP;
  p.rect(x, hi, 1, lo - hi + 1, '#000');
  p.rect(x - 2, top, 5, bot - top + 1, '#000');
  if (!down && bot - top > 1) p.rect(x - 1, top + 1, 3, bot - top - 1, '#fff');
});
const band = { 'stroke-dasharray': '4 3' };
p.line('270,177 283,174 297,169 305,167 313,172 327,174 335,173 350,168 360,161 367,153 375,151 383,130 393,118 403,115 413,121 430,128 442,124 448,125 460,138 477,148 493,154 518,162 537,167 553,167 567,165 577,150 582,143 588,146 593,158 602,198 610,228 617,245 627,260 633,267 646,280 660,285 681,284 703,279 717,281 726,268 735,260 746,240 756,228 766,224 774,216 782,217 790,207 803,213 814,225 831,229 856,227 870,220 879,216 896,220 914,223 935,228 956,235 981,237 989,250 1003,263 1024,271 1053,277 1071,277 1089,273 1103,267 1118,265 1134,266 1142,253 1150,240 1166,232 1177,235 1191,250 1213,262 1241,272 1256,273 1274,265 1295,262 1309,245 1324,228 1334,218 1342,217 1350,197 1358,183 1370,170 1384,163 1395,167 1420,180 1441,180 1470,177 1491,177 1509,173 1531,182 1549,193 1566,220 1590,235 1599,263 1609,285 1620,296', '#c4c4c4', band);
p.line('270,189 287,183 300,181 327,182 350,180 360,173 375,162 390,145 400,140 410,145 423,150 430,151 443,159 460,161 487,166 517,172 527,172 543,185 560,183 568,185 574,195 582,196 588,215 593,235 603,265 613,282 630,292 638,296 660,298 681,295 703,287 717,285 726,288 739,277 756,250 766,253 774,277 782,288 792,272 810,257 831,248 856,244 881,233 903,231 917,237 935,247 953,251 974,252 982,267 992,278 1010,284 1039,283 1060,286 1078,283 1096,277 1118,278 1127,282 1138,283 1150,263 1166,253 1174,267 1191,273 1227,277 1256,281 1277,273 1299,267 1322,263 1334,248 1350,235 1363,213 1381,188 1399,187 1416,192 1441,190 1470,187 1491,190 1513,197 1531,208 1549,227 1566,249 1582,252 1590,283 1599,310 1606,315', '#c4c4c4', band);
p.add('path', { d: 'M274 82h8l-4 4z' });
p.rect(284, 79, 206, 10, '#fff');
p.text(286, 88, 'EURUSD,H1');
p.text(346, 88, '1.29350 1.29361 1.29240 1.29278');

const pa = layer('price-axis', 1626, 77);
['1.32335', '1.32050', '1.31765', '1.31480', '1.31195', '1.30910', '1.30625', '1.30340', '1.30055'].forEach((t, i) => {
  const y = [100, 132, 164, 197, 229, 261, 294, 326, 358][i];
  pa.rect(1626, y, 3, 1, '#000');
  pa.text(1631, y + 4, t);
});

const r = layer('rvi', 271, 393);
r.grid(X0, END, 32, 393, 487, [442], pink, '4 3');
const blueDash = { 'stroke-dasharray': '4 4' };
['270,420 279,415 290,408', '329,410 335,417 343,430 350,437 357,435 367,423 379,415 398,408 405,412 412,420 421,429 430,431 439,428 454,429 468,436 486,440 500,447 520,458 529,459 541,456 567,456 576,452 583,447 590,449 599,458 606,467 617,471 631,469 672,467 692,469 706,475 717,473 724,458 731,433 742,420 753,408 760,406 767,411 774,421 782,430 790,433 803,432 824,434 846,433 858,437 867,442 881,442 892,438 903,430 912,429 919,433 928,442 947,442 960,448 978,450 989,462 999,469 1008,469 1017,466 1042,462 1071,462 1081,457 1099,457 1106,447 1118,435 1124,436 1134,441 1141,438 1149,429 1158,421 1166,420 1175,425 1186,435 1199,440 1215,441 1227,445 1259,446 1274,455 1286,460 1295,457 1306,442 1316,427 1327,423 1349,418 1363,410 1374,406 1390,409 1409,418 1427,422 1441,422 1470,425 1479,432 1488,443 1495,450 1503,453 1511,450 1527,447 1543,448 1552,457 1566,468 1583,464 1590,468 1599,476 1608,479 1618,477'].forEach(s => r.line(s, '#1e90ff', blueDash));
['270,420 287,418 303,408', '335,408 339,411 350,423 359,431 367,432 374,428 382,421 390,416 398,412 405,410 414,412 422,418 430,424 439,428 462,431 479,435 495,440 511,448 527,456 534,458 543,458 560,456 576,455 588,451 599,451 606,454 615,463 624,468 631,469 649,469 672,467 696,469 710,472 718,473 726,469 734,456 742,442 750,425 758,414 766,409 774,411 782,417 790,425 798,430 814,431 831,433 860,434 872,438 883,441 892,441 903,437 912,433 919,432 928,434 942,441 953,443 971,448 982,450 992,454 1006,465 1015,467 1024,467 1039,464 1055,462 1071,462 1087,460 1103,457 1112,452 1118,446 1126,440 1134,437 1145,437 1150,436 1158,432 1166,427 1174,423 1183,423 1190,428 1202,435 1215,440 1227,442 1241,445 1266,446 1277,450 1288,456 1294,457 1303,455 1310,449 1320,438 1329,430 1338,424 1352,420 1365,415 1374,410 1383,408 1390,407 1399,409 1416,416 1425,419 1441,422 1463,423 1477,426 1486,431 1495,438 1506,447 1511,451 1519,451 1534,448 1550,449 1559,454 1574,464 1583,466 1590,466 1599,468 1614,476 1622,478'].forEach(s => r.line(s, '#f00'));
r.text(273, 405, 'RVI(15) 0.018 0.016');
const ra = layer('rvi-axis', 1626, 392);
[['0.411', 394, 401], ['0.000', 442, 445], ['-0.385', 486, 485]].forEach(([t, y, b]) => { if (y !== 442) ra.rect(1626, y, 3, 1, '#000'); ra.text(1630, b, t); });

const v = layer('vsa', 271, 490);
v.grid(X0, END, 32, 490, 595, [569], pink, '4 3');
volumes.forEach((s, i) => {
  const h = parseInt(s, 10);
  v.rect(276 + i * STEP, 569 - h, 4, h, tone[s.slice(-1)] || '#00bfff');
});
v.line('270,566 287,560 303,565 311,565 335,577 359,565 374,565 390,558 414,566 422,566 439,560 454,564 462,564 486,571 495,571 511,578 525,570 535,571 548,565 557,570 560,570 574,566 582,571 598,579 606,581 624,581 646,584 654,582 662,585 671,586 678,583 687,581 694,583 703,579 717,572 726,565 735,563 742,559 750,561 758,565 774,569 790,562 803,568 814,570 830,566 842,569 853,574 862,576 871,572 885,572 894,567 903,571 912,575 919,575 926,572 942,571 950,574 966,570 974,571 984,575 992,574 1006,570 1024,570 1039,568 1055,569 1071,567 1087,568 1103,559 1112,563 1120,563 1134,567 1142,563 1150,567 1158,569 1170,573 1188,581 1200,581 1215,586 1223,586 1230,583 1238,586 1246,585 1254,581 1262,582 1270,581 1286,575 1294,569 1303,563 1310,565 1318,563 1334,555 1342,553 1358,547 1366,542 1374,541 1383,544 1390,545 1399,549 1424,555 1431,552 1441,558 1470,568 1479,574 1486,578 1494,578 1503,574 1519,577 1526,573 1534,574 1550,582 1559,585 1574,578 1590,585 1599,580 1608,577 1614,578 1622,582', '#000');
v.text(273, 502, 'TradeVsaNumbers 1422668000 0 0 -311678867');
[['BAR : 99%', 507], ['ATR : 0.00123', 522], ['SPREAD FLOATING : 100', 537], ['ABOVE AVERAGE', 572]].forEach(([t, y]) => v.text(1389, y, t, { class: 'info' }));
v.text(1389, 557, 'DELTA : 0', { class: 'info big', fill: '#ff4500' });
v.text(1389, 592, 'VOLUME : 0', { class: 'info big', fill: '#0f0' });
const va = layer('vsa-axis', 1626, 489);
[['8874616775', 491, 498], ['0', 569, 572], ['-298598500', 594, 593]].forEach(([t, y, b]) => { if (y !== 569) va.rect(1626, y, 3, 1, '#000'); va.text(1630, b, t); });

const t = layer('time', 270, 596);
['1 May 2013', '1 May 08:00', '1 May 16:00', '2 May 00:00', '2 May 08:00', '2 May 16:00', '3 May 00:00', '3 May 08:00', '3 May 16:00', '6 May 00:00', '6 May 08:00', '6 May 16:00', '7 May 00:00', '7 May 08:00', '7 May 16:00', '8 May 00:00', '8 May 08:00', '8 May 16:00', '9 May 00:00', '9 May 08:00', '9 May 16:00', '10 May 00:00'].forEach((s, i) => {
  t.rect(270 + 64 * i, 596, 1, 4, '#000');
  t.text(270 + 64 * i, 608, s);
});

// Strategy tester report
const b = layer('balance', 21, 739);
b.grid(21, END, 32, 739, 903, [742, 774, 806, 838, 870], '#c8c8c8', '4 3');
b.line('21,881 71,881 85,867 101,894 118,886 133,896 150,835 164,844 214,844 230,868 246,789 260,796 347,796 358,794 374,842 390,821 406,831 422,757 431,757 649,757', '#00aa00', { 'stroke-width': 2 });
b.line('21,880 118,880 134,843 214,843 230,795 390,795 406,756 649,756', '#0000aa', { 'stroke-width': 2 });
const legend = b.add('text', { x: 24, y: 750, fill: '#0000aa' }, 'Баланс');
for (const [s, c] of [[' / ', '#000'], ['Средства', '#00aa00']]) {
  const span = document.createElementNS(NS, 'tspan');
  span.textContent = s;
  span.setAttribute('fill', c);
  legend.append(span);
}
const ba = layer('balance-axis', 1632, 738);
[73, 70, 67, 64, 61, 58].forEach((n, i) => ba.text(1636, 742 + 32 * i, n));

const m = layer('margin', 21, 906);
m.grid(21, END, 32, 906, 944, [], '#c8c8c8', '4 3');
[[85, 927], [117, 929], [133, 930], [149, 923], [246, 918], [358, 919], [390, 922], [406, 923], [422, 915]].forEach(([x, y]) => m.rect(x - 1, y, 2, 944 - y, '#00aa00'));
m.text(24, 917, 'Уровень маржи');
const ma = layer('margin-axis', 1632, 905);
ma.text(1636, 915, '610%');
ma.text(1636, 943, '360%');

const d = layer('dates', 20, 945);
for (let x = 21; x < END; x += 32) d.rect(x, 944, 1, 3, '#000');
['2013.01.01', '2013.01.09', '2013.01.09', '2013.01.16', '2013.01.18', '2013.01.28', '2013.01.29', '2013.02.01', '2013.02.11', '2013.02.18'].forEach((s, i) => d.text(22 + 64 * i, 956, s));
```
